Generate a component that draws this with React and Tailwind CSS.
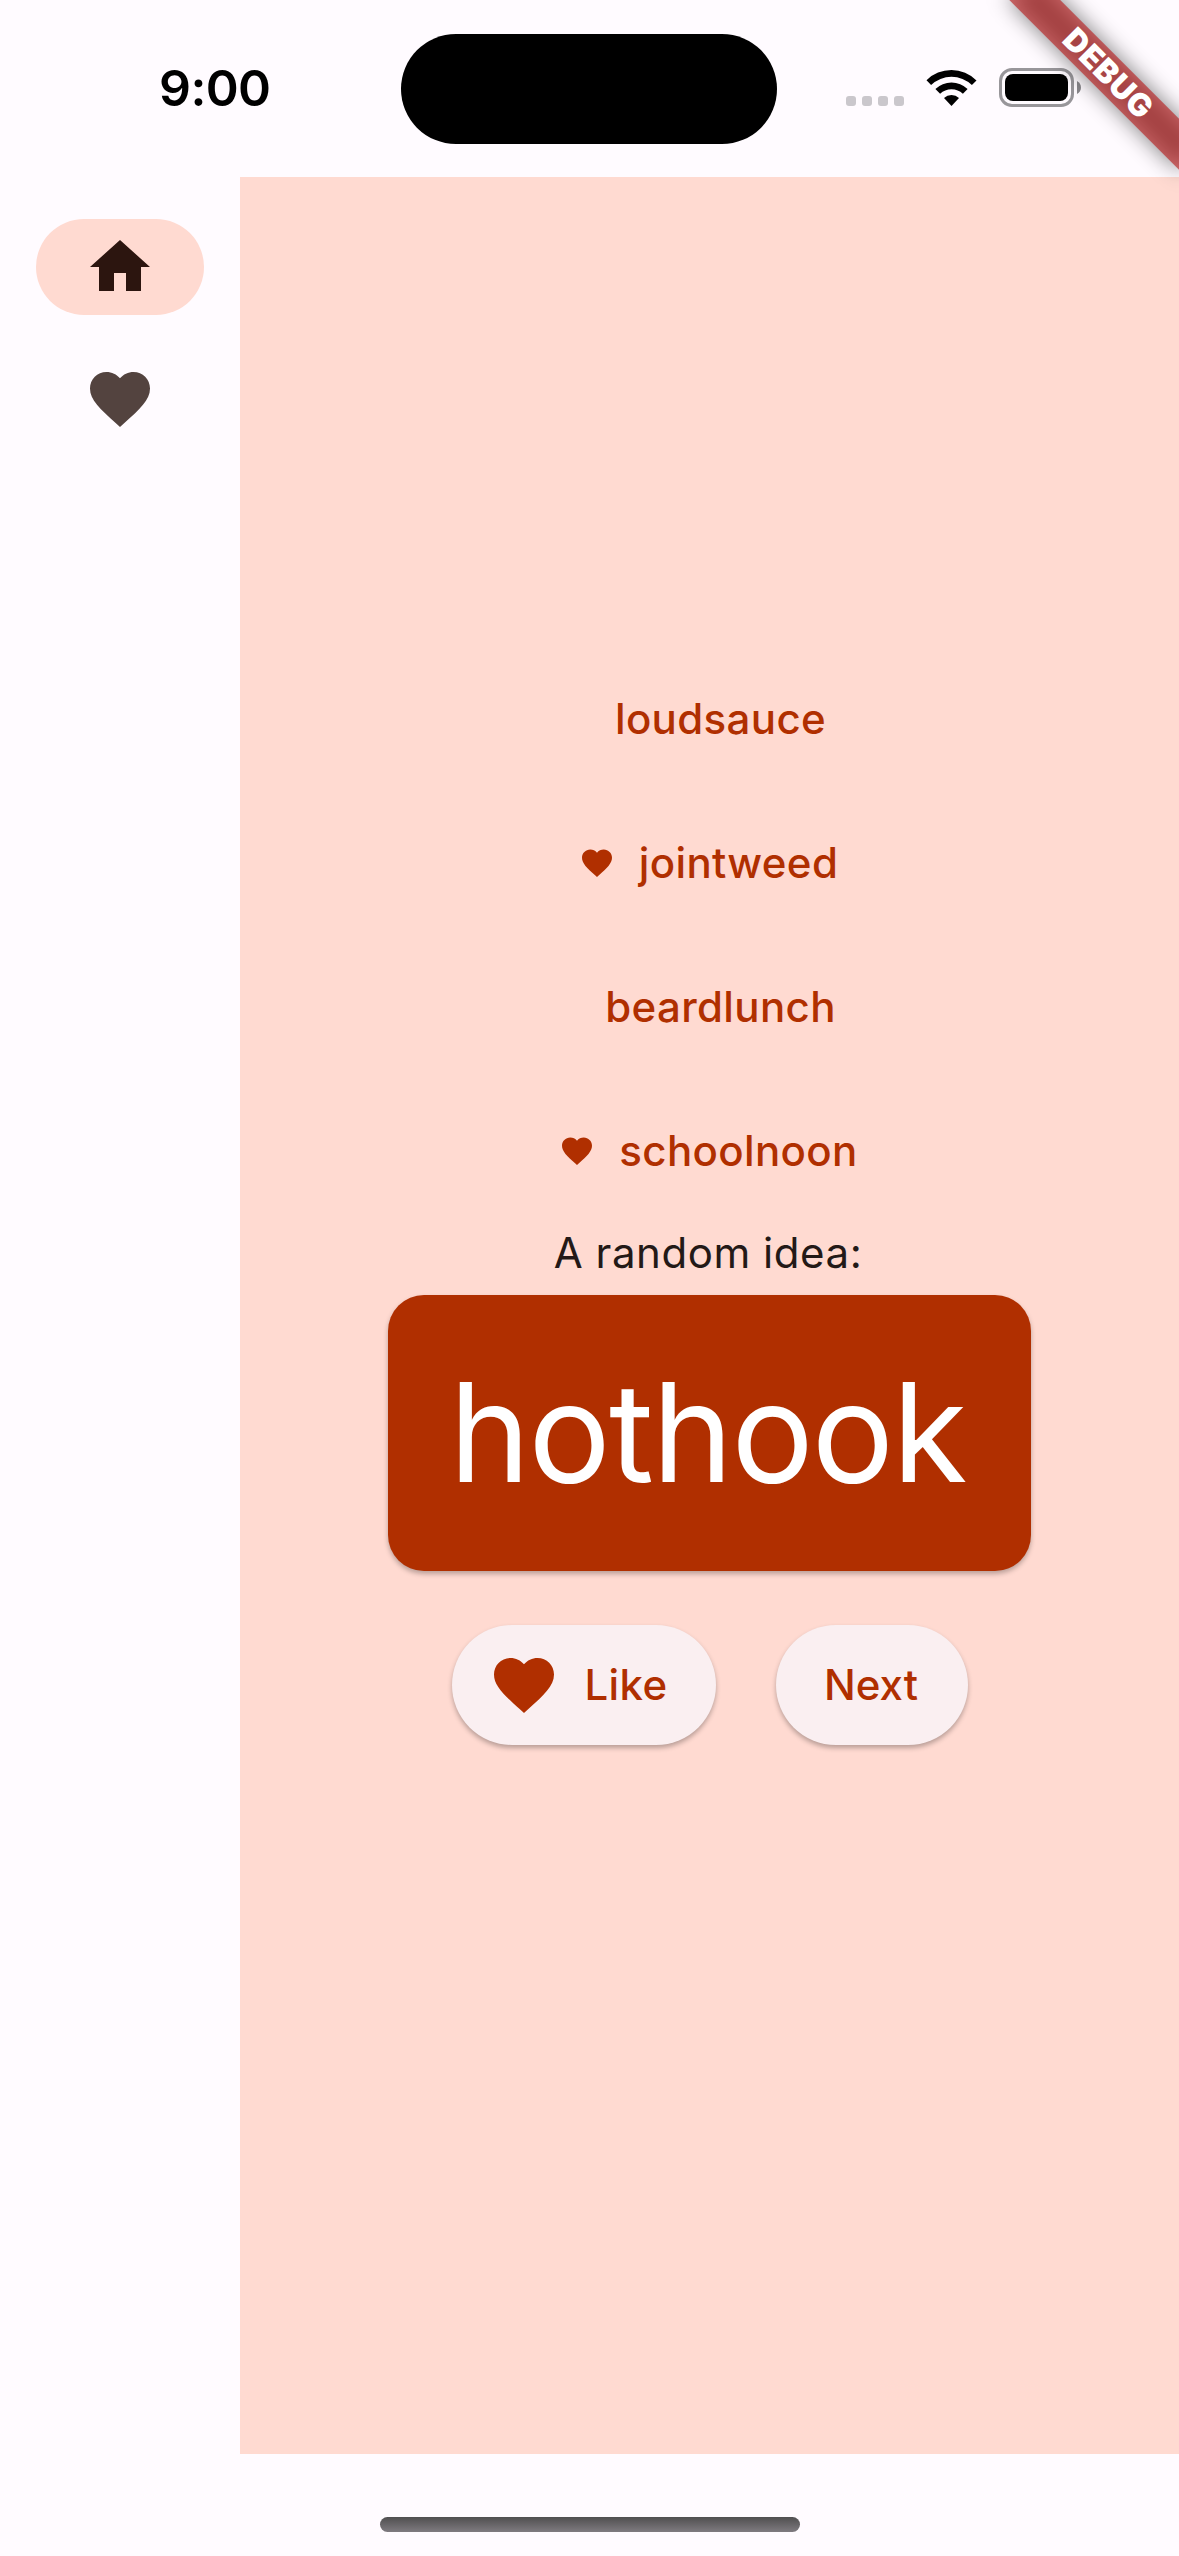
import React from "react";

const HEART =
  "M12 21.35l-1.45-1.32C5.4 15.36 2 12.28 2 8.5 2 5.42 4.42 3 7.5 3c1.74 0 3.41.81 4.5 2.09C13.09 3.81 14.76 3 16.5 3 19.58 3 22 5.42 22 8.5c0 3.78-3.4 6.86-8.55 11.54L12 21.35z";
const HOME = "M10 20v-6h4v6h5v-8h3L12 3 2 12h3v8z";

function Icon({ path, className }) {
  return (
    <svg viewBox="0 0 24 24" fill="currentColor" className={`shrink-0 ${className}`} aria-hidden="true">
      <path d={path} />
    </svg>
  );
}

function StatusBar() {
  return (
    <header className="relative flex h-[177px] shrink-0 text-black">
      <div className="flex h-[176px] w-[401px] items-center pl-[159px]">
        <span className="text-[50px] leading-none font-semibold tracking-[-0.6px]">9:00</span>
      </div>
      <div className="mt-[33.5px] h-[110.5px] w-[376px] rounded-full bg-black" />
      <div className="flex h-[175px] items-center pl-[69px]">
        <div className="mt-[27px] flex gap-[6px]">
          {[0, 1, 2, 3].map((i) => (
            <span key={i} className="size-[10px] rounded-[3px] bg-[#cac7cc]" />
          ))}
        </div>
        <svg viewBox="0 0 51 38" className="ml-[22px] h-[38px] w-[51px]" aria-hidden="true">
          <path d="M0.5 11.2a35.5 35.5 0 0 1 50 0.2l-4.6 4.6a29.4 29.4 0 0 0-40.8 0z" />
          <path d="M9.4 20.1a23.2 23.2 0 0 1 32.2 0l-4.7 4.7a16.4 16.4 0 0 0-22.8 0z" />
          <path d="M18 29a11 11 0 0 1 15 0l-7.5 8z" />
        </svg>
        <div className="ml-[22px] flex items-center">
          <div className="h-[39px] w-[75px] rounded-[13px] border-[3px] border-[#98969a] p-[3px]">
            <div className="h-full w-full rounded-[8px] bg-black" />
          </div>
          <svg viewBox="0 0 4 13" className="ml-[3px] h-[13px] w-[4px]" aria-hidden="true">
            <path d="M0 0C5.3 2.5 5.3 10.500 0 13z" fill="#89878b" />
          </svg>
        </div>
      </div>
    </header>
  );
}

function DebugBanner() {
  return (
    <div className="absolute top-[84px] right-[-120px] h-[36px] w-[240px] origin-[120px_-84px] rotate-45">
      <div className="absolute inset-0 bg-black/50 blur-[11px]" />
      <div className="relative flex h-full items-center justify-center bg-[#b71c1c]/63 pl-[4px]">
        <span className="text-[31.5px] leading-none font-black tracking-[0.6px] text-white">DEBUG</span>
      </div>
    </div>
  );
}

function NavigationRail() {
  return (
    <nav className="flex w-[240px] shrink-0 flex-col items-center gap-[36px] pt-[42px]">
      <button className="flex h-[96px] w-[168px] items-center justify-center rounded-full bg-[#ffdad1] text-[#2c150f]">
        <Icon path={HOME} className="size-[72px]" />
      </button>
      <button className="flex h-[96px] w-[168px] items-center justify-center rounded-full text-[#53433f]">
        <Icon path={HEART} className="size-[72px]" />
      </button>
    </nav>
  );
}

const HISTORY = [
  { word: "loudsauce", liked: false },
  { word: "jointweed", liked: true },
  { word: "beardlunch", liked: false },
  { word: "schoolnoon", liked: true },
];

function HistoryList() {
  return (
    <ul className="flex h-[1045.5px] flex-col justify-end pr-[2px]">
      {HISTORY.map(({ word, liked }) => (
        <li
          key={word}
          className="flex h-[144px] items-center justify-center gap-[24px] text-[42px] leading-none font-medium tracking-[0.36px] text-[#b02f00]"
        >
          {liked ? <Icon path={HEART} className="size-[36px]" /> : <span />}
          <span>{word}</span>
        </li>
      ))}
    </ul>
  );
}

export default function App() {
  return (
    <div className="relative flex h-[2556px] w-[1179px] flex-col overflow-hidden bg-[#fffbff] font-[Inter,sans-serif]">
      <StatusBar />
      <div className="flex h-[2277px] shrink-0">
        <NavigationRail />
        <main className="flex flex-1 flex-col items-center bg-[#ffdad1]">
          <HistoryList />
          <p className="flex h-[60px] items-center pr-[3px] text-[42px] leading-none tracking-[0.55px] text-[#231917]">
            A random idea:
          </p>
          <div className="mt-[12px] flex h-[276px] w-[643px] items-center justify-center rounded-[36px] bg-[#b02f00] pr-[4px] text-[137px] leading-none tracking-[-1.7px] text-white shadow-[0_3px_5px_rgba(0,0,0,0.27)]">
            hothook
          </div>
          <div className="mt-[54px] flex gap-[60px] text-[42px] leading-none font-medium text-[#b02f00]">
            <button className="flex h-[120px] w-[264px] items-center gap-[25px] rounded-full bg-[#faeff1] pl-[36px] tracking-[0.36px] shadow-[0_3px_5px_rgba(0,0,0,0.28)]">
              <Icon path={HEART} className="size-[72px]" />
              Like
            </button>
            <button className="flex h-[120px] w-[192px] items-center justify-center rounded-full bg-[#faeff1] pr-[1px] shadow-[0_3px_5px_rgba(0,0,0,0.28)]">
              Next
            </button>
          </div>
        </main>
      </div>
      <div className="mt-[63px] h-[15px] w-[420px] self-center rounded-full bg-linear-to-b from-[#504f50] to-[#7f7b80]" />
      <DebugBanner />
    </div>
  );
}
